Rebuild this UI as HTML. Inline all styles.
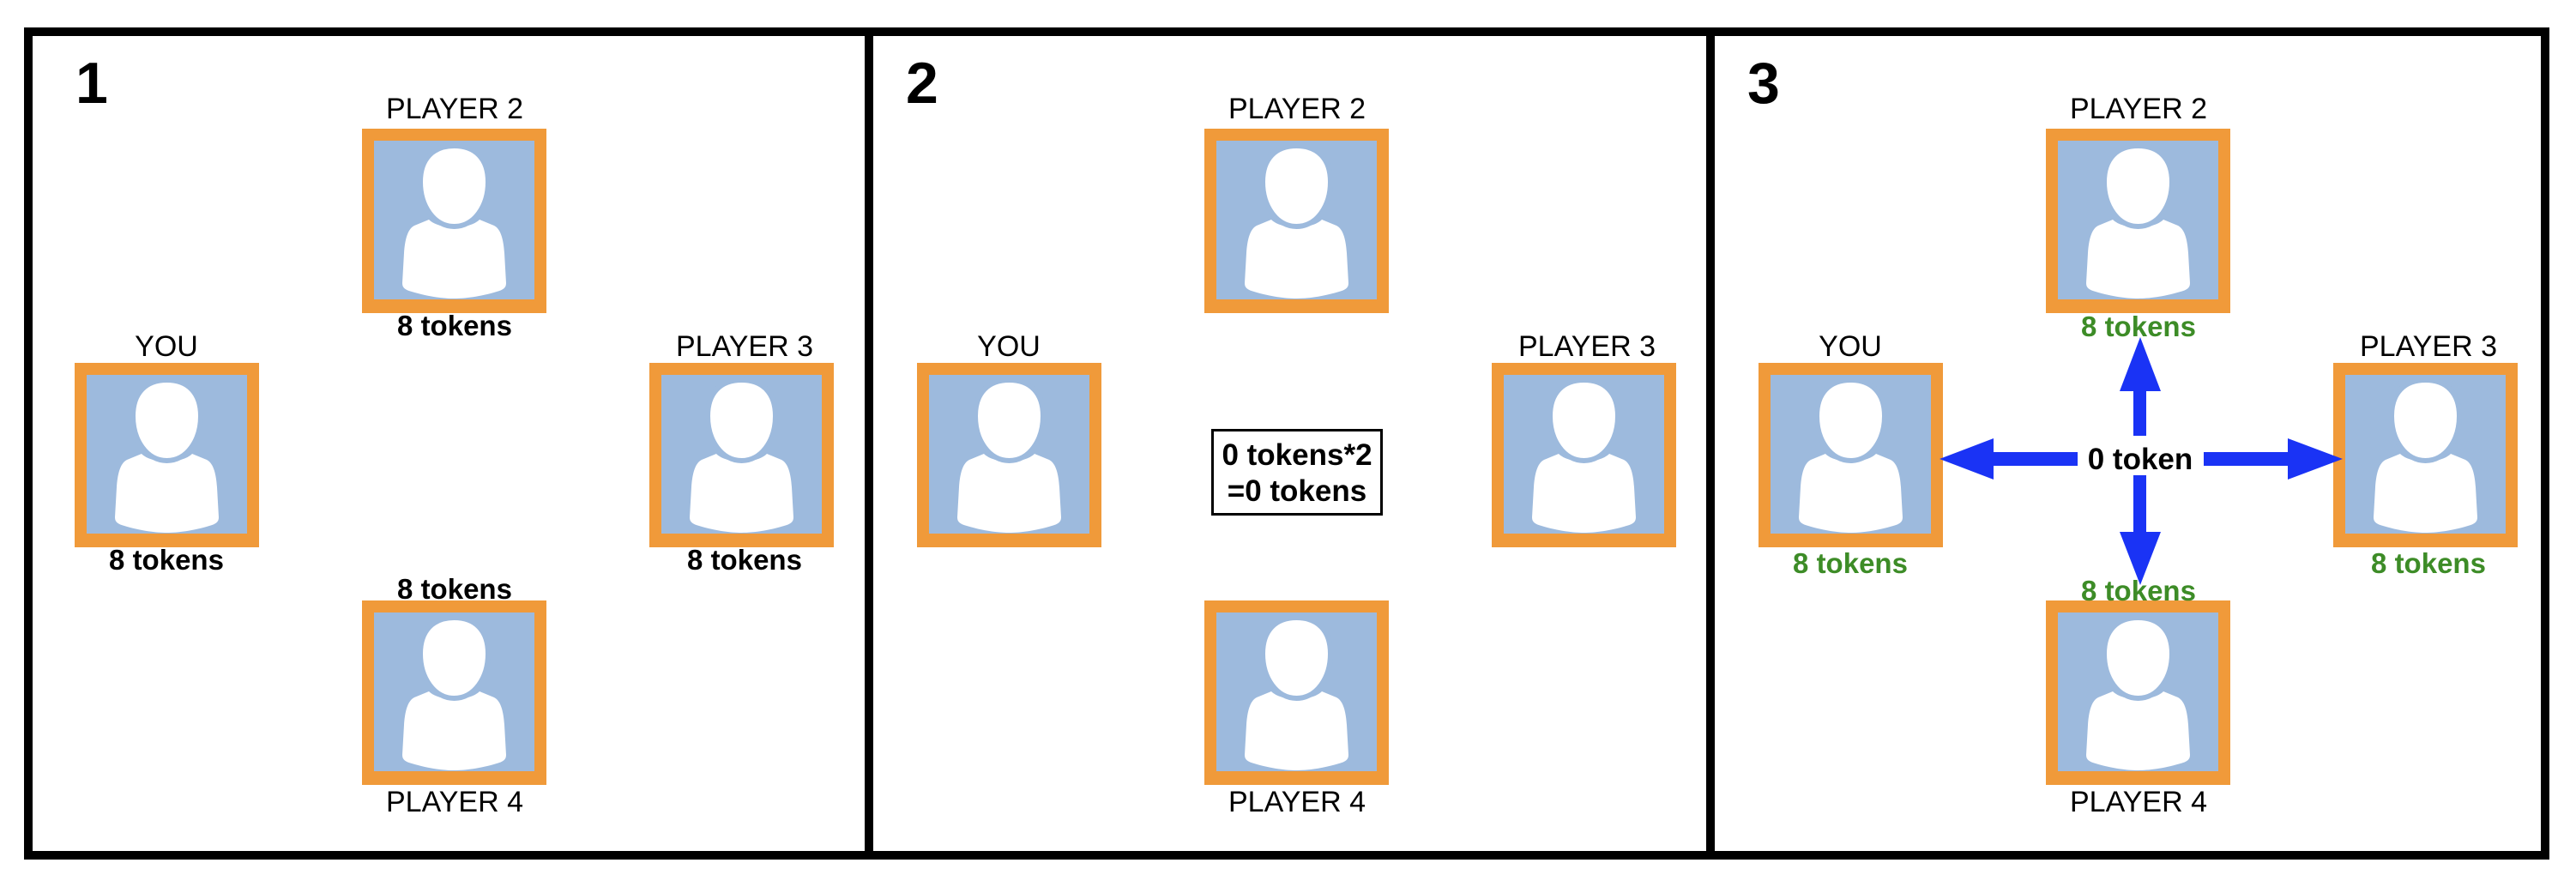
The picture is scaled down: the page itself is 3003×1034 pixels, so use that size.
<!DOCTYPE html>
<html><head><meta charset="utf-8"><style>
html,body{margin:0;padding:0;background:#fff;width:3003px;height:1034px;overflow:hidden}
svg text{font-family:"Liberation Sans",sans-serif}
.l{font-size:34px;text-anchor:middle;fill:#000}
.t{font-size:33px;font-weight:bold;text-anchor:middle;fill:#000}
.c{font-size:35px;font-weight:bold;text-anchor:middle;fill:#000}
.g{font-size:33px;font-weight:bold;text-anchor:middle;fill:#3d8c27}
.n{font-size:68px;font-weight:bold;fill:#000}
</style></head><body>
<svg width="3003" height="1034" viewBox="0 0 3003 1034" xmlns="http://www.w3.org/2000/svg">
<defs>
<g id="av">
<rect x="0" y="0" width="215" height="215" fill="#f09a3a"/>
<rect x="14" y="14" width="187" height="185" fill="#9dbadd"/>
<path d="M78 106 C90 118 125 118 137 106 L154 113 C162 117 165 130 166 145 L168 180 C168 186 164 188 157 190 C137 196 120 198 107.5 198 C95 198 78 196 58 190 C51 188 47 186 47 180 L49 145 C50 130 53 117 61 113 Z" fill="#fff"/>
<path d="M107.5 20 C132 20 147 35 147 62 C147 90 131 114 107.5 114 C84 114 68 90 68 62 C68 35 83 20 107.5 20 Z" fill="#fff" stroke="#9dbadd" stroke-width="6"/>
</g>
</defs>
<rect x="33" y="37" width="2934" height="960" fill="none" stroke="#000" stroke-width="10"/>
<rect x="1008" y="37" width="10" height="960" fill="#000"/>
<rect x="1989" y="37" width="10" height="960" fill="#000"/>

<text class="n" x="88" y="120">1</text>
<text class="n" x="1056" y="120">2</text>
<text class="n" x="2037" y="120">3</text>

<!-- panel 1 -->
<g>
<use href="#av" x="422" y="150"/><use href="#av" x="87" y="423"/><use href="#av" x="757" y="423"/><use href="#av" x="422" y="700"/>
<text class="l" x="530" y="138">PLAYER 2</text>
<text class="t" x="530" y="391">8 tokens</text>
<text class="l" x="194" y="415">YOU</text>
<text class="t" x="194" y="664">8 tokens</text>
<text class="l" x="868" y="415">PLAYER 3</text>
<text class="t" x="868" y="664">8 tokens</text>
<text class="t" x="530" y="698">8 tokens</text>
<text class="l" x="530" y="946">PLAYER 4</text>
</g>

<!-- panel 2 -->
<g transform="translate(982,0)">
<use href="#av" x="422" y="150"/><use href="#av" x="87" y="423"/><use href="#av" x="757" y="423"/><use href="#av" x="422" y="700"/>
<text class="l" x="530" y="138">PLAYER 2</text>
<text class="l" x="194" y="415">YOU</text>
<text class="l" x="868" y="415">PLAYER 3</text>
<text class="l" x="530" y="946">PLAYER 4</text>
</g>
<rect x="1413.5" y="501.5" width="197" height="98" fill="none" stroke="#000" stroke-width="3"/>
<text class="c" x="1512" y="542">0 tokens*2</text>
<text class="c" x="1512" y="584">=0 tokens</text>

<!-- panel 3 -->
<g transform="translate(1963,0)">
<use href="#av" x="422" y="150"/><use href="#av" x="87" y="423"/><use href="#av" x="757" y="423"/><use href="#av" x="422" y="700"/>
<text class="l" x="530" y="138">PLAYER 2</text>
<text class="g" x="530" y="392">8 tokens</text>
<text class="l" x="194" y="415">YOU</text>
<text class="g" x="194" y="668">8 tokens</text>
<text class="l" x="868" y="415">PLAYER 3</text>
<text class="g" x="868" y="668">8 tokens</text>
<text class="g" x="530" y="700">8 tokens</text>
<text class="l" x="530" y="946">PLAYER 4</text>
</g>
<g fill="#1a33f5">
<polygon points="2261,535 2324,511 2324,527 2422,527 2422,543 2324,543 2324,559"/>
<polygon points="2731,535 2667,511 2667,527 2569,527 2569,543 2667,543 2667,559"/>
<polygon points="2495,393 2471,456 2487,456 2487,508 2502,508 2502,456 2519,456"/>
<polygon points="2495,682 2471,620 2487,620 2487,554 2502,554 2502,620 2519,620"/>
</g>
<text class="c" x="2495" y="547">0 token</text>
</svg>
</body></html>
